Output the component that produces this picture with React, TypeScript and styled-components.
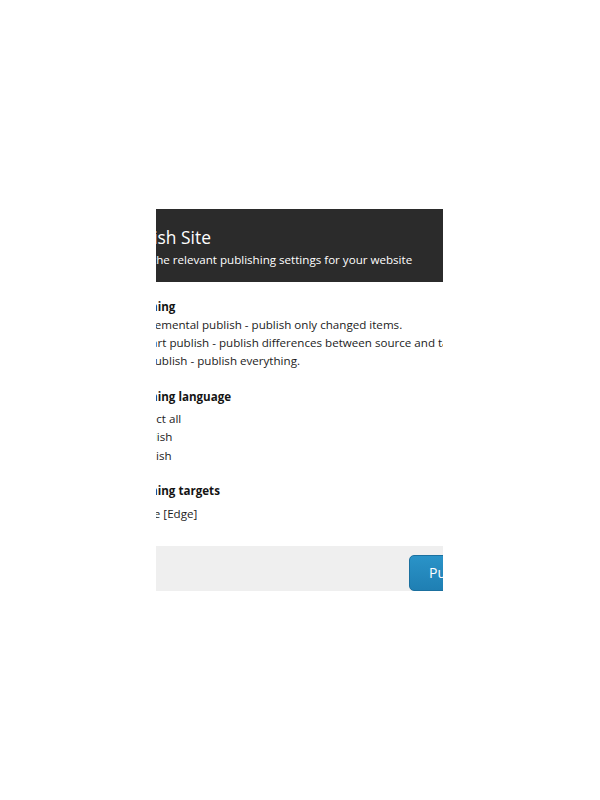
import React from 'react'
import styled, { createGlobalStyle } from 'styled-components'

const GlobalStyle = createGlobalStyle`
  html, body {
    margin: 0;
    padding: 0;
    background: #ffffff;
  }
  body {
    font-family: 'Open Sans', 'Liberation Sans', sans-serif;
    color: #1c1c1c;
  }
`

const Page = styled.div`
  width: 600px;
  height: 800px;
  padding-top: 209px;
  box-sizing: border-box;
`

// the dialog is seen through a narrow window, cut on both sides
const Viewport = styled.div`
  margin-left: 156px;
  width: 287px;
  height: 382px;
  overflow: hidden;
`

const Dialog = styled.div`
  width: 560px;
  margin-left: -60px;
  background: #ffffff;
`

const Header = styled.div`
  height: 73px;
  box-sizing: border-box;
  padding: 16px 20px 0 21px;
  background: #2b2b2b;
  color: #ffffff;
`

const Title = styled.div`
  font-size: 17.4px;
  line-height: 24px;
`

const Subtitle = styled.div`
  margin-top: 1.5px;
  font-size: 11.6px;
  line-height: 18px;
`

const Body = styled.div`
  padding: 15.5px 19px 22px;
  font-size: 11.6px;
`

const Section = styled.div<{ $gap: number }>`
  & + & {
    margin-top: 17.5px;
  }
  & > h3 {
    margin: 0 0 ${p => p.$gap}px;
  }
`

const Heading = styled.h3`
  font-size: 11.6px;
  line-height: 18px;
  font-weight: 700;
  color: #141414;
`

const Option = styled.label`
  display: flex;
  align-items: center;
  height: 18.3px;
  line-height: 18px;
  white-space: nowrap;
  input {
    width: 13px;
    height: 13px;
    margin: 0 6px 0 0;
  }
`

const Footer = styled.div`
  display: flex;
  gap: 8px;
  padding: 9px 20px 12px 313px;
  background: #efefef;
`

const Button = styled.button<{ $primary?: boolean }>`
  height: 36px;
  padding: 0 19px;
  border-radius: 5px;
  font-family: 'Open Sans', 'Liberation Sans', sans-serif;
  font-size: 14px;
  border: 1px solid ${p => (p.$primary ? '#1b709f' : '#c8c8c8')};
  background: ${p => (p.$primary ? 'linear-gradient(#2a93c8, #1f7fb3)' : '#ffffff')};
  color: ${p => (p.$primary ? '#ffffff' : '#333333')};
`

const modes = [
  { id: 'incremental', label: 'Incremental publish - publish only changed items.' },
  { id: 'smart', label: 'Smart publish - publish differences between source and target database.' },
  { id: 'republish', label: 'Republish - publish everything.' }
]

const languages = ['Select all', 'English', 'Danish']

const App = () => {
  return (
    <Page>
      <GlobalStyle />
      <Viewport>
        <Dialog>
          <Header>
            <Title>Publish Site</Title>
            <Subtitle>Select the relevant publishing settings for your website</Subtitle>
          </Header>
          <Body>
            <Section $gap={0}>
              <Heading>Publishing</Heading>
              {modes.map(m => (
                <Option key={m.id}>
                  <input type="radio" name="mode" defaultChecked={m.id === 'smart'} />
                  {m.label}
                </Option>
              ))}
            </Section>
            <Section $gap={4}>
              <Heading>Publishing language</Heading>
              {languages.map(l => (
                <Option key={l}>
                  <input type="checkbox" defaultChecked />
                  {l}
                </Option>
              ))}
            </Section>
            <Section $gap={5}>
              <Heading>Publishing targets</Heading>
              <Option>
                <input type="checkbox" defaultChecked />
                Edge [Edge]
              </Option>
            </Section>
          </Body>
          <Footer>
            <Button $primary>Publish</Button>
            <Button>Cancel</Button>
          </Footer>
        </Dialog>
      </Viewport>
    </Page>
  )
}

export default App
